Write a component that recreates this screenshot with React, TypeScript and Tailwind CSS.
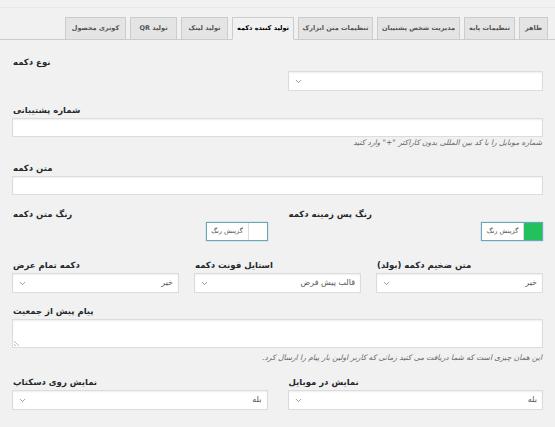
import { ChevronDown } from "lucide-react";

const tabs = [
  { label: "ظاهر", w: "w-[29px]" },
  { label: "تنظیمات پایه", w: "w-[51px]" },
  { label: "مدیریت شخص پشتیبان", w: "w-[83px]" },
  { label: "تنظیمات متن ابزارک", w: "w-[75px]" },
  { label: "تولید کننده دکمه", w: "w-[62px]", active: true },
  { label: "تولید لینک", w: "w-[47px]" },
  { label: "تولید QR", w: "w-[47px]" },
  { label: "کوتری محصول", w: "w-[61px]" },
];

const Label = ({ children }: { children: React.ReactNode }) => (
  <div dir="rtl" className="h-[15px] leading-[15px] text-left text-[8.5px] font-bold text-[#23282d] pl-px whitespace-nowrap">
    {children}
  </div>
);

const Select = ({ value }: { value?: string }) => (
  <div className="h-[20px] bg-white border border-[#dcdcdc] shadow-[inset_0_1px_2px_rgba(0,0,0,0.07)] flex items-center justify-between px-[5px]">
    <ChevronDown size={9} strokeWidth={2} className="text-[#777]" />
    <span dir="rtl" className="text-[8px] text-[#555]">{value}</span>
  </div>
);

const Input = ({ h = "h-[19px]" }: { h?: string }) => (
  <div className={`${h} bg-white border border-[#dcdcdc] shadow-[inset_0_1px_2px_rgba(0,0,0,0.07)]`} />
);

const Help = ({ children }: { children: React.ReactNode }) => (
  <p dir="rtl" className="h-[12px] leading-[12px] text-right text-[7.5px] italic text-[#666] pr-px whitespace-nowrap">
    {children}
  </p>
);

const ColorButton = ({ color }: { color: string }) => (
  <div className="flex justify-end">
    <div className="w-[62px] h-[19px] flex border border-[#6aa7bb] shadow-[0_0_1px_rgba(30,140,190,0.6)] bg-white">
      <div dir="rtl" className="flex-1 flex items-center justify-center text-[6.5px] text-[#555] border-r border-[#ddd]">
        گزینش رنگ
      </div>
      <div className="w-[18px]" style={{ backgroundColor: color }} />
    </div>
  </div>
);

export default function App() {
  return (
    <div className="w-[555px] h-[427px] bg-[#f1f1f1] overflow-hidden font-['DejaVu_Sans',sans-serif]">
      {/* Tabs */}
      <div className="h-[8px] border-b border-[#e9e9e9]" />
      <div className="pt-[9px] border-b border-[#ccc]">
        <div className="flex flex-row-reverse gap-[4px] pr-[7px]">
          {tabs.map((t) => (
            <div
              key={t.label}
              dir="rtl"
              className={`${t.w} h-[23px] -mb-px flex items-center justify-center overflow-hidden text-[6.5px] font-bold whitespace-nowrap border border-[#ccc] ${
                t.active
                  ? "bg-[#f1f1f1] border-b-[#f1f1f1] text-[#000]"
                  : "bg-[#e4e4e4] text-[#555]"
              }`}
            >
              {t.label}
            </div>
          ))}
        </div>
      </div>

      <div className="px-[12px]">
        {/* Button type */}
        <div className="mt-[15px]">
          <Label>نوع دکمه</Label>
          <div className="grid grid-cols-2 gap-[20px] mt-px">
            <div />
            <Select />
          </div>
        </div>

        {/* Support number */}
        <div className="mt-[12px]">
          <Label>شماره پشتیبانی</Label>
          <Input />
          <Help>شماره موبایل را با کد بین المللی بدون کاراکتر "+" وارد کنید</Help>
        </div>

        {/* Button text */}
        <div className="mt-[12px]">
          <Label>متن دکمه</Label>
          <Input />
        </div>

        {/* Colors */}
        <div className="grid grid-cols-2 gap-[20px] mt-[12px]">
          <div>
            <Label>رنگ متن دکمه</Label>
            <ColorButton color="#ffffff" />
          </div>
          <div>
            <Label>رنگ پس زمینه دکمه</Label>
            <ColorButton color="#22c15e" />
          </div>
        </div>

        {/* Three selects */}
        <div className="grid grid-cols-3 gap-[15px] mt-[17px]">
          <div>
            <Label>دکمه تمام عرض</Label>
            <Select value="خیر" />
          </div>
          <div>
            <Label>استایل فونت دکمه</Label>
            <Select value="قالب پیش فرض" />
          </div>
          <div>
            <Label>متن ضخیم دکمه (بولد)</Label>
            <Select value="خیر" />
          </div>
        </div>

        {/* Pre-message */}
        <div className="mt-[11px]">
          <Label>پیام پیش از جمعیت</Label>
          <div className="relative">
            <Input h="h-[29px]" />
            <svg className="absolute left-[2px] bottom-[2px]" width="6" height="6" viewBox="0 0 6 6">
              <path d="M0 1 L5 6 M0 4 L2 6" stroke="#aaa" strokeWidth="0.8" />
            </svg>
          </div>
          <div className="mt-[4px]">
            <Help>این همان چیزی است که شما دریافت می کنید زمانی که کاربر اولین بار پیام را ارسال کرد.</Help>
          </div>
        </div>

        {/* Display */}
        <div className="grid grid-cols-2 gap-[20px] mt-[11px]">
          <div>
            <Label>نمایش روی دسکتاپ</Label>
            <Select value="بله" />
          </div>
          <div>
            <Label>نمایش در موبایل</Label>
            <Select value="بله" />
          </div>
        </div>
      </div>
    </div>
  );
}
